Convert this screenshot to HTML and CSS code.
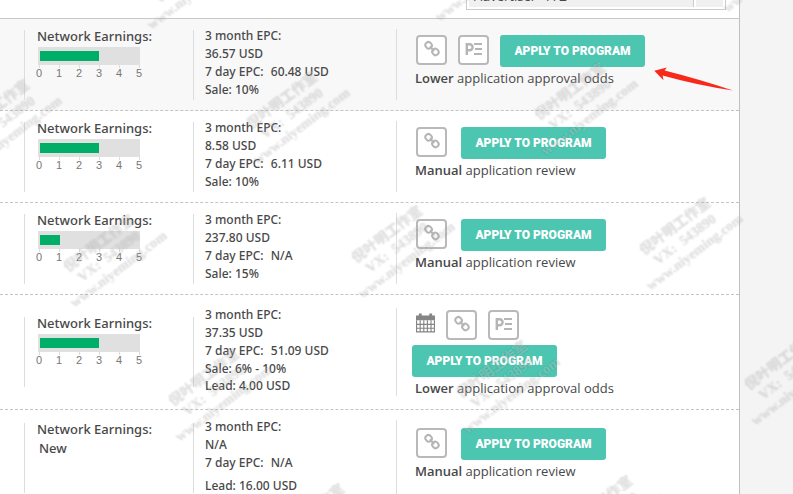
FILE: index.html
```html
<!DOCTYPE html>
<html lang="en">
  <head>
    <title>Advertisers</title>
    <meta charset="utf-8">
    <meta name="viewport" content="width=device-width, initial-scale=1">
    <link rel="stylesheet" href="styles.css">
  </head>
  <body>
    <!-- shared icons -->
    <svg class="sprite" aria-hidden="true">
      <symbol id="icon-link" viewBox="0 0 16 18">
        <g fill="none" stroke="#b5b5b5" stroke-width="2">
          <rect x="1.600" y="2" width="6" height="6.600" rx="2.900" transform="rotate(-40 4.600 5.300)"/>
          <rect x="8.400" y="8.600" width="6" height="6.600" rx="2.900" transform="rotate(-40 11.400 11.900)"/>
          <path d="M5.800 6.400l4.400 4.600"/>
        </g>
      </symbol>
      <symbol id="icon-pe" viewBox="0 0 17 14">
        <path fill="none" stroke="#b5b5b5" stroke-width="2.4" d="M1.8 13V2.200h2.800a3 3 0 0 1 0 6H1.800"/>
        <path fill="none" stroke="#b5b5b5" stroke-width="2" d="M9 2h8M10 7h7M9 12h8"/>
      </symbol>
      <symbol id="icon-calendar" viewBox="0 0 20 22">
        <path fill="#858585" d="M0 3h3V1h3v2h8V1h3v2h3v5H0z"/>
        <path fill="none" stroke="#858585" stroke-width="1.2" d="M.6 8v12.4h18.8V8M.6 12.5h18.8M.6 16.5h18.8M4.4 8v12.4M8.2 8v12.4M12 8v12.4M15.8 8v12.4"/>
      </symbol>
    </svg>

    <main class="panel">
      <header class="toolbar">
        <div class="sort">
          <select class="sort-select" aria-label="Sort by">
            <option>Advertiser - A-Z</option>
          </select>
          <span class="sort-arrow"></span>
        </div>
      </header>

      <section class="program program-active">
        <div class="cell cell-blank"></div>
        <div class="cell cell-earnings">
          <h2>Network Earnings:</h2>
          <div class="track"><div class="bar" style="width: 60%"></div></div>
          <ol class="scale"><li>0</li><li>1</li><li>2</li><li>3</li><li>4</li><li>5</li></ol>
        </div>
        <div class="cell cell-epc">
          <p>3 month EPC:</p>
          <p>36.57 USD</p>
          <p>7 day EPC: <span class="value">60.48 USD</span></p>
          <p class="rate">Sale: 10%</p>
        </div>
        <div class="cell cell-apply">
          <div class="actions">
            <div class="icons">
              <span class="icon-box"><svg class="icon-link"><use href="#icon-link"/></svg></span>
              <span class="icon-box"><svg class="icon-pe"><use href="#icon-pe"/></svg></span>
            </div>
            <button type="button" class="apply">APPLY TO PROGRAM</button>
          </div>
          <p class="note"><b>Lower</b> application approval odds</p>
        </div>
      </section>

      <section class="program">
        <div class="cell cell-blank"></div>
        <div class="cell cell-earnings">
          <h2>Network Earnings:</h2>
          <div class="track"><div class="bar" style="width: 60%"></div></div>
          <ol class="scale"><li>0</li><li>1</li><li>2</li><li>3</li><li>4</li><li>5</li></ol>
        </div>
        <div class="cell cell-epc">
          <p>3 month EPC:</p>
          <p>8.58 USD</p>
          <p>7 day EPC: <span class="value">6.11 USD</span></p>
          <p class="rate">Sale: 10%</p>
        </div>
        <div class="cell cell-apply">
          <div class="actions actions-single">
            <div class="icons">
              <span class="icon-box"><svg class="icon-link"><use href="#icon-link"/></svg></span>
            </div>
            <button type="button" class="apply">APPLY TO PROGRAM</button>
          </div>
          <p class="note"><b>Manual</b> application review</p>
        </div>
      </section>

      <section class="program">
        <div class="cell cell-blank"></div>
        <div class="cell cell-earnings">
          <h2>Network Earnings:</h2>
          <div class="track"><div class="bar" style="width: 20%"></div></div>
          <ol class="scale"><li>0</li><li>1</li><li>2</li><li>3</li><li>4</li><li>5</li></ol>
        </div>
        <div class="cell cell-epc">
          <p>3 month EPC:</p>
          <p>237.80 USD</p>
          <p>7 day EPC: <span class="value">N/A</span></p>
          <p class="rate">Sale: 15%</p>
        </div>
        <div class="cell cell-apply">
          <div class="actions actions-single">
            <div class="icons">
              <span class="icon-box"><svg class="icon-link"><use href="#icon-link"/></svg></span>
            </div>
            <button type="button" class="apply">APPLY TO PROGRAM</button>
          </div>
          <p class="note"><b>Manual</b> application review</p>
        </div>
      </section>

      <section class="program">
        <div class="cell cell-blank"></div>
        <div class="cell cell-earnings">
          <h2>Network Earnings:</h2>
          <div class="track"><div class="bar" style="width: 60%"></div></div>
          <ol class="scale"><li>0</li><li>1</li><li>2</li><li>3</li><li>4</li><li>5</li></ol>
        </div>
        <div class="cell cell-epc">
          <p>3 month EPC:</p>
          <p>37.35 USD</p>
          <p>7 day EPC: <span class="value">51.09 USD</span></p>
          <p class="rate">Sale: 6% - 10%</p>
          <p class="rate">Lead: 4.00 USD</p>
        </div>
        <div class="cell cell-apply">
          <div class="actions actions-stacked">
            <div class="icons">
              <svg class="icon-calendar"><use href="#icon-calendar"/></svg>
              <span class="icon-box"><svg class="icon-link"><use href="#icon-link"/></svg></span>
              <span class="icon-box"><svg class="icon-pe"><use href="#icon-pe"/></svg></span>
            </div>
            <button type="button" class="apply">APPLY TO PROGRAM</button>
          </div>
          <p class="note"><b>Lower</b> application approval odds</p>
        </div>
      </section>

      <section class="program">
        <div class="cell cell-blank"></div>
        <div class="cell cell-earnings">
          <h2>Network Earnings:</h2>
          <p class="new">New</p>
        </div>
        <div class="cell cell-epc">
          <p>3 month EPC:</p>
          <p>N/A</p>
          <p>7 day EPC: <span class="value">N/A</span></p>
          <p class="rate rate-only">Lead: 16.00 USD</p>
        </div>
        <div class="cell cell-apply">
          <div class="actions actions-single">
            <div class="icons">
              <span class="icon-box"><svg class="icon-link"><use href="#icon-link"/></svg></span>
            </div>
            <button type="button" class="apply">APPLY TO PROGRAM</button>
          </div>
          <p class="note"><b>Manual</b> application review</p>
        </div>
      </section>
    </main>

    <!-- red pointer to the apply button -->
    <svg class="pointer" viewBox="0 0 80 26" aria-hidden="true">
      <path fill="#f8281a" d="M.3 5.8L12.8 2.5 10.6 5.6Q44 14 79 25.6 44 20.500 8.600 10.600L9.500 15.300z"/>
    </svg>

    <!-- watermarks -->
    <div class="marks" aria-hidden="true">
      <div class="mark mark-1">倪叶明工作室<br>VX: &nbsp;543890<br>www.niyeming.com</div>
      <div class="mark mark-2">倪叶明工作室<br>VX: &nbsp;543890<br>www.niyeming.com</div>
      <div class="mark mark-3">倪叶明工作室<br>VX: &nbsp;543890<br>www.niyeming.com</div>
      <div class="mark mark-4">倪叶明工作室<br>VX: &nbsp;543890<br>www.niyeming.com</div>
      <div class="mark mark-5">倪叶明工作室<br>VX: &nbsp;543890<br>www.niyeming.com</div>
      <div class="mark mark-6">倪叶明工作室<br>VX: &nbsp;543890<br>www.niyeming.com</div>
      <div class="mark mark-7">倪叶明工作室<br>VX: &nbsp;543890<br>www.niyeming.com</div>
      <div class="mark mark-8">倪叶明工作室<br>VX: &nbsp;543890<br>www.niyeming.com</div>
      <div class="mark mark-9">倪叶明工作室<br>VX: &nbsp;543890<br>www.niyeming.com</div>
      <div class="mark mark-10">倪叶明工作室<br>VX: &nbsp;543890<br>www.niyeming.com</div>
      <div class="mark mark-11">倪叶明工作室<br>VX: &nbsp;543890<br>www.niyeming.com</div>
      <div class="mark mark-12">倪叶明工作室<br>VX: &nbsp;543890<br>www.niyeming.com</div>
      <div class="mark mark-13">倪叶明工作室<br>VX: &nbsp;543890<br>www.niyeming.com</div>
      <div class="mark mark-14">倪叶明工作室<br>VX: &nbsp;543890<br>www.niyeming.com</div>
    </div>
  </body>
</html>
```

FILE: styles.css
```css
* {
  box-sizing: border-box;
}

html {
  overflow: hidden;
}

body {
  background: #f4f4f4;
  color: #484848;
  font-family: "Open Sans", "Liberation Sans", sans-serif;
  font-size: 13px;
  margin: 0;
  position: relative;
}

h2, p, ol {
  font-size: inherit;
  font-weight: 400;
  list-style: none;
  margin: 0;
  padding: 0;
}

.sprite {
  display: none;
}

.panel {
  background: #fff;
  border-right: 1px solid #c0c0c0;
  margin-right: 53px;
}

/* toolbar */
.toolbar {
  align-items: flex-end;
  border-bottom: 1px solid #c8c8c8;
  display: flex;
  height: 19px;
  justify-content: flex-end;
  overflow: hidden;
  padding: 0 13px 8px 0;
}

.sort {
  background: #fff;
  border: 1px solid #ccc;
  display: flex;
  flex: none;
  height: 28px;
  padding: 2px;
  width: 260px;
}

.sort-select {
  appearance: none;
  background: #f0f0f0;
  border: 0;
  color: #484848;
  flex: 1;
  font: inherit;
  padding: 0 5px;
}

.sort-arrow {
  background: #f0f0f0;
  border-left: 1px solid #ccc;
  box-shadow: inset 2px 0 #fff;
  width: 30px;
}

/* program rows */
.program {
  align-items: center;
  border-bottom: 1px dashed #c4c4c4;
  display: grid;
  grid-template-columns: 25px 169px 203px 1fr;
  padding: 10px 0;
}

.program-active {
  background: #f8f8f8;
}

.cell {
  border-right: 1px solid #ddd;
  min-height: 70px;
}

.cell:last-child {
  border-right: 0;
}

.cell-earnings {
  font-family: "Noto Sans", "Open Sans", sans-serif;
  padding-left: 12px;
}

.cell-earnings h2 {
  font-weight: 500;
  line-height: 12px;
  padding-bottom: 5px;
}

.new {
  font-weight: 500;
  line-height: 16px;
  padding-left: 2px;
}

.track {
  background: #e0e0e0;
  height: 18px;
  margin-left: 1px;
  padding: 4px 1px 4px 2px;
  width: 102px;
}

.bar {
  background: #00ae68;
  height: 10px;
}

.scale {
  color: #777;
  display: flex;
  font-family: "Liberation Sans", sans-serif;
  font-size: 11px;
  line-height: 10px;
  margin-left: -8px;
}

.scale li {
  text-align: center;
  width: 20px;
}

.scale li::before {
  background: #ddd;
  content: "";
  display: block;
  height: 3px;
  margin: 0 auto;
  width: 1px;
}

.cell-epc {
  font-family: "Noto Sans", "Open Sans", sans-serif;
  font-size: 12px;
  line-height: 18px;
  min-height: 71px;
  padding-left: 11px;
}

.cell-epc p {
  font-weight: 500;
  margin-top: -2px;
  padding-bottom: 2px;
}

.value {
  margin-left: 4px;
}

.cell-epc .rate {
  line-height: 17px;
}

.cell-epc .rate-only {
  padding-top: 5px;
}

.cell-apply {
  padding: 5px 0 0 15px;
}

.actions {
  align-items: flex-start;
  display: flex;
  gap: 11px;
}

.actions-single {
  gap: 14px;
}

.actions-stacked {
  flex-direction: column;
  gap: 5px;
}

.icons {
  align-items: flex-start;
  display: flex;
  gap: 11px;
  margin-left: 4px;
}

.icon-box {
  background: #fff;
  border: 2px solid #b9b9b9;
  border-radius: 4px;
  display: grid;
  height: 30px;
  padding-bottom: 2px;
  place-items: center;
  width: 31px;
}

.icon-link {
  height: 18px;
  width: 16px;
}

.icon-pe {
  height: 14px;
  width: 17px;
}

.icon-calendar {
  height: 22px;
  margin-top: 2px;
  width: 19px;
}

.apply {
  background: #4cc5b1;
  border: 0;
  border-radius: 3px;
  color: #fff;
  cursor: pointer;
  font-family: Roboto, sans-serif;
  font-size: 12px;
  font-weight: 900;
  height: 32px;
  padding: 0;
  width: 145px;
}

.apply:hover {
  background: #3db5a1;
}

.note {
  line-height: 22px;
  padding-left: 3px;
}

.note b {
  font-weight: 600;
}

/* overlays */
.pointer {
  height: 26px;
  left: 654px;
  position: absolute;
  top: 65px;
  width: 80px;
}

.marks {
  height: 494px;
  inset: 0;
  overflow: hidden;
  pointer-events: none;
  position: absolute;
}

.mark {
  color: rgba(240, 240, 240, .3);
  font-family: "Liberation Serif", "Noto Sans CJK SC", serif;
  font-size: 14px;
  font-weight: 700;
  line-height: 16px;
  margin-top: -48px;
  position: absolute;
  text-align: center;
  text-shadow: 0 0 2px rgba(0, 0, 0, .16);
  transform: rotate(-37deg);
  transform-origin: 0 100%;
  white-space: nowrap;
}

/* left and top give the start of the last line */
.mark-1 { left: 154px; top: 33px; }
.mark-2 { left: 442px; top: 25px; }
.mark-3 { left: 730px; top: 16px; }
.mark-4 { left: -28px; top: 176px; }
.mark-5 { left: 260px; top: 168px; }
.mark-6 { left: 548px; top: 159px; }
.mark-7 { left: 77px; top: 311px; }
.mark-8 { left: 365px; top: 302px; }
.mark-9 { left: 653px; top: 294px; }
.mark-10 { left: 182px; top: 445px; }
.mark-11 { left: 470px; top: 437px; }
.mark-12 { left: 758px; top: 429px; }
.mark-13 { left: 287px; top: 580px; }
.mark-14 { left: 575px; top: 572px; }
```
